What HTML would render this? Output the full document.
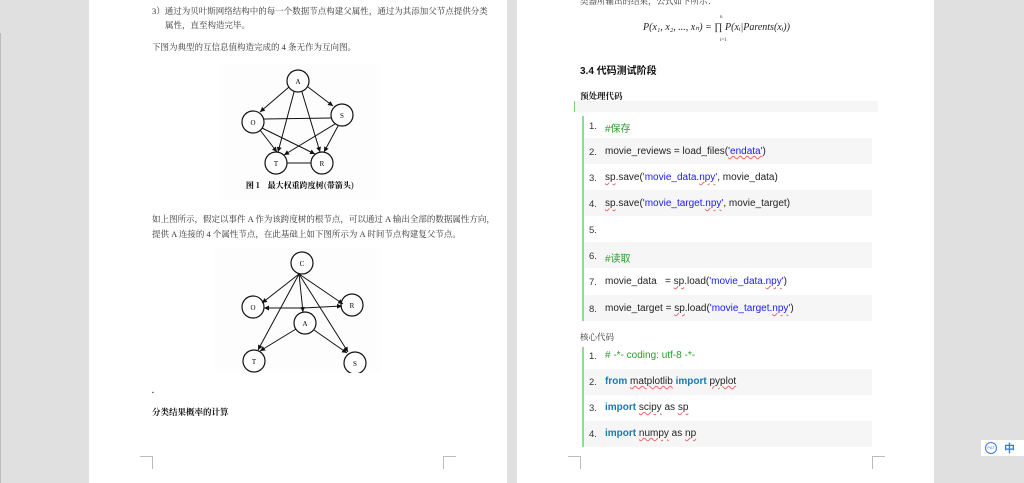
<!DOCTYPE html>
<html><head><meta charset="utf-8"><style>
body{margin:0;width:1024px;height:483px;background:#e0e0e0;position:relative;overflow:hidden;font-family:"Liberation Serif","Noto Serif CJK SC",serif;}
.page{position:absolute;top:0;height:483px;background:#fff;}
.t{position:absolute;font-size:8.5px;color:#333;white-space:nowrap;}
.c{position:absolute;font-family:"Liberation Sans","Noto Sans CJK SC",sans-serif;font-size:10px;color:#222;white-space:nowrap;}
.row{position:absolute;left:584px;width:288px;height:26px;}
.sh{background:#f6f6f6;}
.n{position:absolute;left:589px;font-family:"Liberation Sans",sans-serif;font-size:9.5px;color:#333;}
.s{color:#1a1aff;} .g{color:#2a9a2a;} .k{color:#1a7ab0;font-weight:bold;}
.u{text-decoration:underline wavy #e66;text-decoration-thickness:1px;}
.cor{position:absolute;width:12px;height:12px;border-color:#bbb;border-style:solid;border-width:0;}
</style></head><body>
<div class="page" style="left:89px;width:418px"></div>
<div class="page" style="left:517px;width:417px"></div>
<div style="position:absolute;left:0;top:33px;width:1px;height:450px;background:#bbb"></div>

<div class="t" style="left:152px;top:5px">3）通过为贝叶斯网络结构中的每一个数据节点构建父属性，通过为其添加父节点提供分类</div>
<div class="t" style="left:165px;top:19px">属性，直至构造完毕。</div>
<div class="t" style="left:152px;top:41px">下图为典型的互信息值构造完成的 4 条无作为互向图。</div>
<svg style="position:absolute;left:220px;top:64px" width="160" height="136" viewBox="0 0 160 136">
<defs><marker id="ar" viewBox="0 0 10 10" refX="10" refY="5" markerWidth="5" markerHeight="5" orient="auto"><path d="M0 0L10 5L0 10z" fill="#111"/></marker></defs>
<rect width="160" height="136" fill="#fdfdfd"/>
<g fill="#fff" stroke="#111" stroke-width="1.2">
<circle cx="78" cy="17" r="11"/><circle cx="33" cy="58" r="11"/><circle cx="122" cy="51" r="11"/><circle cx="56" cy="99" r="11"/><circle cx="102" cy="99" r="11"/></g>
<g stroke="#111" stroke-width="1" fill="none">
<line x1="69" y1="23" x2="40" y2="48" marker-end="url(#ar)"/><line x1="88" y1="23" x2="113" y2="42" marker-end="url(#ar)"/><line x1="74" y1="28" x2="58" y2="88" marker-end="url(#ar)"/><line x1="82" y1="28" x2="100" y2="88" marker-end="url(#ar)"/>
<line x1="44" y1="55" x2="112" y2="54"/><line x1="40" y1="66" x2="57" y2="88" marker-end="url(#ar)"/><line x1="42" y1="64" x2="95" y2="90" marker-end="url(#ar)"/><line x1="115" y1="60" x2="64" y2="91" marker-end="url(#ar)"/><line x1="118" y1="62" x2="104" y2="88" marker-end="url(#ar)"/><line x1="67" y1="99" x2="91" y2="99"/></g>
<g font-size="7" font-family="Liberation Serif" text-anchor="middle"><text x="78" y="20">A</text><text x="33" y="61">O</text><text x="122" y="54">S</text><text x="56" y="102">T</text><text x="102" y="102">R</text></g>
<text x="80" y="124" font-size="8" text-anchor="middle" font-family="Noto Serif CJK SC" font-weight="bold">图 1　最大权重跨度树(带箭头)</text>
</svg>
<div class="t" style="left:152px;top:213px">如上图所示，假定以事件 A 作为该跨度树的根节点，可以通过 A 输出全部的数据属性方向，</div>
<div class="t" style="left:152px;top:228px">提供 A 连接的 4 个属性节点，在此基础上如下图所示为 A 时间节点构建复父节点。</div>
<svg style="position:absolute;left:215px;top:248px" width="166" height="125" viewBox="0 0 166 125">
<rect width="166" height="125" fill="#fdfdfd"/>
<g fill="#fff" stroke="#111" stroke-width="1.2">
<circle cx="87" cy="15" r="11"/><circle cx="38" cy="59" r="11"/><circle cx="137" cy="57" r="11"/><circle cx="90" cy="75" r="11"/><circle cx="39" cy="113" r="11"/><circle cx="140" cy="115" r="11"/></g>
<g stroke="#111" stroke-width="1"><line x1="84" y1="26" x2="47" y2="55" marker-end="url(#ar)"/><line x1="84" y1="26" x2="88" y2="64" marker-end="url(#ar)"/><line x1="84" y1="26" x2="128" y2="56" marker-end="url(#ar)"/><line x1="84" y1="26" x2="43" y2="102" marker-end="url(#ar)"/><line x1="84" y1="26" x2="133" y2="104" marker-end="url(#ar)"/><line x1="88" y1="60" x2="127" y2="58" marker-end="url(#ar)"/><line x1="88" y1="60" x2="49" y2="60" marker-end="url(#ar)"/><line x1="81" y1="81" x2="45" y2="103" marker-end="url(#ar)"/><line x1="99" y1="82" x2="132" y2="105" marker-end="url(#ar)"/></g>
<g font-size="7" font-family="Liberation Serif" text-anchor="middle"><text x="87" y="18">C</text><text x="38" y="62">O</text><text x="137" y="60">R</text><text x="90" y="78">A</text><text x="39" y="116">T</text><text x="140" y="118">S</text></g>
</svg>
<div class="t" style="left:152px;top:391px;font-size:5px">▪</div>
<div class="t" style="left:152px;top:406px;font-weight:bold;color:#111">分类结果概率的计算</div>
<div class="cor" style="left:140px;top:456px;border-top-width:1px;border-right-width:1px"></div>
<div class="cor" style="left:443px;top:456px;border-top-width:1px;border-left-width:1px"></div>

<div class="t" style="left:580px;top:-5px">类器所输出的结果，公式如下所示：</div>
<div class="t" style="left:643px;top:22px;font-size:10px;font-style:italic;color:#222">P(x₁, x₂, ..., xₙ) = ∏ P(xᵢ|Parents(xᵢ))</div>
<div class="t" style="left:720px;top:15px;font-size:5px">n</div><div class="t" style="left:720px;top:38px;font-size:5px">i=1</div>
<div class="c" style="left:580px;top:62px;font-size:10px;font-weight:bold;color:#111">3.4 代码测试阶段</div>
<div class="t" style="left:580px;top:90px;font-weight:bold;color:#111">预处理代码</div>
<div style="position:absolute;left:574px;top:101px;width:303px;height:11px;background:#f6f6f6;border-left:1px solid #7fd07f"></div>
<div style="position:absolute;left:582px;top:116px;width:2px;height:205px;background:#8dde8d"></div>
<div class="row sh" style="top:138px"></div><div class="row sh" style="top:190px"></div><div class="row sh" style="top:242px"></div><div class="row sh" style="top:295px"></div>
<div class="n" style="top:121px">1.</div><div class="c" style="left:605px;top:120px"><span class="g">#保存</span></div>
<div class="n" style="top:147px">2.</div><div class="c" style="left:605px;top:146px">movie_reviews = load_files(<span class="s u">'endata'</span>)</div>
<div class="n" style="top:173px">3.</div><div class="c" style="left:605px;top:172px"><span class="u">sp</span>.save(<span class="s">'movie_data.<span class="u">npy</span>'</span>, movie_data)</div>
<div class="n" style="top:199px">4.</div><div class="c" style="left:605px;top:198px"><span class="u">sp</span>.save(<span class="s">'movie_target.<span class="u">npy</span>'</span>, movie_target)</div>
<div class="n" style="top:225px">5.</div>
<div class="n" style="top:251px">6.</div><div class="c" style="left:605px;top:250px"><span class="g">#读取</span></div>
<div class="n" style="top:277px">7.</div><div class="c" style="left:605px;top:276px">movie_data &nbsp;&nbsp;= <span class="u">sp</span>.load(<span class="s">'movie_data.<span class="u">npy</span>'</span>)</div>
<div class="n" style="top:304px">8.</div><div class="c" style="left:605px;top:303px">movie_target = <span class="u">sp</span>.load(<span class="s">'movie_target.<span class="u">npy</span>'</span>)</div>
<div class="t" style="left:580px;top:331px">核心代码</div>
<div style="position:absolute;left:582px;top:347px;width:2px;height:100px;background:#8dde8d"></div>
<div class="row sh" style="top:369px"></div><div class="row sh" style="top:421px"></div>
<div class="n" style="top:351px">1.</div><div class="c" style="left:605px;top:350px"><span class="g"># -*- coding: utf-8 -*-</span></div>
<div class="n" style="top:377px">2.</div><div class="c" style="left:605px;top:376px"><span class="k">from</span> <span class="u">matplotlib</span> <span class="k">import</span> <span class="u">pyplot</span></div>
<div class="n" style="top:403px">3.</div><div class="c" style="left:605px;top:402px"><span class="k">import</span> <span class="u">scipy</span> as <span class="u">sp</span></div>
<div class="n" style="top:429px">4.</div><div class="c" style="left:605px;top:428px"><span class="k">import</span> <span class="u">numpy</span> as <span class="u">np</span></div>
<div class="cor" style="left:568px;top:456px;border-top-width:1px;border-right-width:1px"></div>
<div class="cor" style="left:872px;top:456px;border-top-width:1px;border-left-width:1px"></div>

<div style="position:absolute;left:981px;top:440px;width:43px;height:16px;background:#fff"></div>
<div style="position:absolute;left:985px;top:442px;width:10px;height:10px;border:1.5px solid #3a7be0;border-radius:50%;font-size:4px;color:#3a7be0;text-align:center;line-height:10px;font-family:Liberation Sans">PAT</div>
<div style="position:absolute;left:1004px;top:440px;font-size:11px;color:#3a7be0;font-weight:bold;font-family:'Noto Sans CJK SC',sans-serif">中</div>
</body></html>
